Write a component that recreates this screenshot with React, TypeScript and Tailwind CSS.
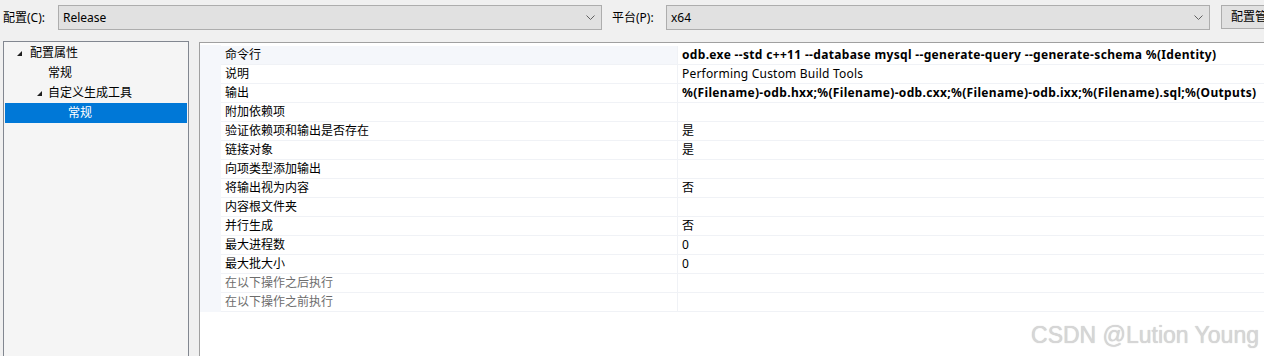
import * as React from "react";

const font = { fontFamily: '"Noto Sans", "Noto Sans CJK SC", sans-serif' };

type Row = { name: string; value?: string; bold?: boolean; disabled?: boolean };

const rows: Row[] = [
  { name: "命令行", value: "odb.exe --std c++11 --database mysql --generate-query --generate-schema %(Identity)", bold: true },
  { name: "说明", value: "Performing Custom Build Tools" },
  { name: "输出", value: "%(Filename)-odb.hxx;%(Filename)-odb.cxx;%(Filename)-odb.ixx;%(Filename).sql;%(Outputs)", bold: true },
  { name: "附加依赖项" },
  { name: "验证依赖项和输出是否存在", value: "是" },
  { name: "链接对象", value: "是" },
  { name: "向项类型添加输出" },
  { name: "将输出视为内容", value: "否" },
  { name: "内容根文件夹" },
  { name: "并行生成", value: "否" },
  { name: "最大进程数", value: "0" },
  { name: "最大批大小", value: "0" },
  { name: "在以下操作之后执行", disabled: true },
  { name: "在以下操作之前执行", disabled: true },
];

const Chevron = () => (
  <svg width="9" height="6" viewBox="0 0 9 6" className="shrink-0">
    <path d="M0.5 0.5 L4.5 4.5 L8.5 0.5" fill="none" stroke="#606060" strokeWidth="1" />
  </svg>
);

const Expander = () => (
  <svg width="7" height="7" viewBox="0 0 7 7" className="shrink-0">
    <path d="M6 1 L6 6 L1 6 Z" fill="#1e1e1e" />
  </svg>
);

const Combo = ({ value }: { value: string }) => (
  <div className="flex h-[25px] w-[544px] shrink-0 items-center justify-between border border-[#adadad] bg-[#e1e1e1] pl-[4px] pr-[6px] text-[12px] text-black">
    <span>{value}</span>
    <Chevron />
  </div>
);

export default function App() {
  return (
    <div className="relative h-[356px] w-[1264px] overflow-hidden bg-[#f0f0f0] text-[12px] text-black" style={font}>
      <div className="flex h-[41px] items-start pt-[5px]">
        <span className="ml-[3px] mt-[4px] w-[55px] shrink-0">配置(C):</span>
        <Combo value="Release" />
        <span className="ml-[10px] mt-[4px] w-[54px] shrink-0">平台(P):</span>
        <Combo value="x64" />
        <div className="ml-[11px] flex h-[24px] w-[110px] shrink-0 items-center border border-[#adadad] bg-[#e1e1e1] pl-[9px] whitespace-nowrap">
          配置管理器...
        </div>
      </div>

      <div className="flex items-start">
        <div className="ml-[3px] h-[320px] w-[186px] shrink-0 border border-[#828790] bg-[#f5f5f5] pt-[1px] px-[1px]">
          <div className="flex h-[20px] items-center pl-[11px]">
            <Expander />
            <span className="ml-[7px]">配置属性</span>
          </div>
          <div className="flex h-[20px] items-center pl-[43px]">常规</div>
          <div className="flex h-[20px] items-center pl-[31px]">
            <Expander />
            <span className="ml-[5px]">自定义生成工具</span>
          </div>
          <div className="flex h-[20px] items-center bg-[#0078d7] pl-[63px] text-white">常规</div>
        </div>

        <div className="ml-[10px] mt-[1px] flex h-[320px] flex-1 border-t border-l border-[#a0a0a0] bg-white pt-[2px]">
          <div className="w-[21px] shrink-0 self-start bg-[#f5f7fb]" style={{ height: rows.length * 19 + 1 }} />
          <div className="flex-1 pt-[1px]">
            {rows.map((r, i) => (
              <div
                key={r.name}
                className={`flex h-[19px] border-b border-[#f0f2f6] ${i === 0 ? "bg-[#f5f7fb]" : ""}`}
              >
                <div
                  className={`flex w-[456px] shrink-0 items-center pl-[4px] ${r.disabled ? "text-[#6d6d6d]" : ""}`}
                >
                  {r.name}
                </div>
                <div
                  className={`flex flex-1 items-center border-l border-[#f0f2f6] pl-[4px] whitespace-nowrap ${
                    i === 0 ? "bg-white" : ""
                  } ${r.bold ? "font-bold tracking-[0.33px]" : "tracking-[0.2px]"}`}
                >
                  {r.value}
                </div>
              </div>
            ))}
          </div>
        </div>
      </div>

      <div
        className="absolute right-[5px] bottom-[9px] text-[23px] leading-none text-[#d6d6d6]"
        style={{ fontFamily: '"Liberation Sans", Arial, sans-serif', textShadow: "0 0 1px #c4c4c4" }}
      >
        CSDN @Lution Young
      </div>
    </div>
  );
}
